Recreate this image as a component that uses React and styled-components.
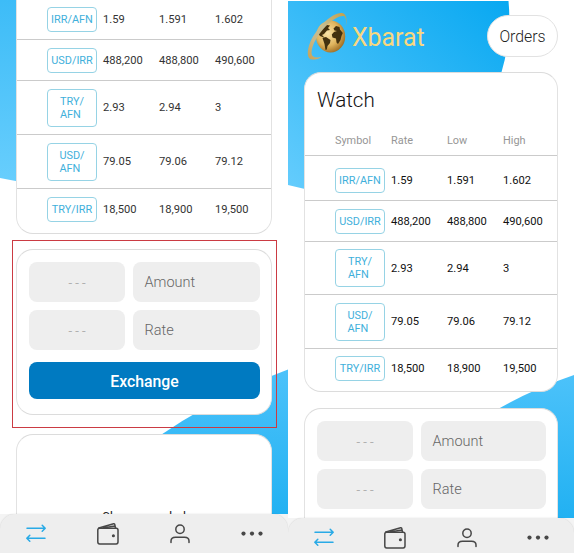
import React from "react";
import styled, { createGlobalStyle } from "styled-components";

const Global = createGlobalStyle`
  * { box-sizing: border-box; }
  body { margin: 0; background: #fff; font-family: Roboto, "Liberation Sans", sans-serif; }
`;

const Page = styled.div`
  display: grid;
  grid-template-columns: 288px 286px;
  width: 574px;
  height: 553px;
  overflow: hidden;
`;

const Screen = styled.section`
  position: relative;
  isolation: isolate;
  display: flex;
  flex-direction: column;
  height: 553px;
  overflow: hidden;
  background: #fff;
`;

const Backdrop = styled.svg`
  position: absolute;
  inset: 0;
  z-index: -1;
`;

const Content = styled.div`
  flex: 1;
  min-height: 0;
  padding: 0 16px;
  overflow: hidden;
  display: flex;
  flex-direction: column;
`;

const Header = styled.header`
  flex: none;
  height: 72px;
  padding: 15px 0 15px 2px;
  display: flex;
  align-items: flex-start;
`;

const Brand = styled.h1`
  margin: 7px 0 0 4px;
  flex: 1;
  font-size: 24.9px;
  line-height: 32px;
  font-weight: 400;
  color: #f8d77f;
`;

const Logo = styled.svg`
  flex: none;
  margin-top: -4px;
`;

const Orders = styled.button`
  width: 71px;
  height: 42px;
  border: 1px solid #e2e2e2;
  border-radius: 21px;
  background: #fff;
  padding: 2px 0 0;
  font: 300 15.8px/38px Roboto, sans-serif;
  color: #222;
`;

const Card = styled.div`
  flex: none;
  height: ${(p) => p.$h}px;
  margin-bottom: ${(p) => p.$gap ?? 16}px;
  border: 1px solid #dcdcdc;
  border-left-color: #e2e2e2;
  border-right-color: #e2e2e2;
  border-radius: ${(p) => (p.$continued ? "0 0 17px 17px" : "17px")};
  border-top-width: ${(p) => (p.$continued ? 0 : 1)}px;
  background: #fff;
`;

const Title = styled.h2`
  margin: 0;
  height: 53px;
  padding: 13px 0 0 12px;
  font-size: 20.6px;
  line-height: 28px;
  font-weight: 300;
  color: #111;
`;

const Row = styled.div`
  display: grid;
  grid-template-columns: 56px 56px 56px 1fr;
  align-items: center;
  height: ${(p) => p.$h}px;
  padding: ${(p) => p.$pad || 0}px 0 0 30px;
  border-bottom: 1px solid #cbcbcb;
  font-size: 11.15px;
  color: ${(p) => (p.$soft ? "#333" : "#111")};
  &:last-child { border-bottom: 0; padding: 0 0 3px 30px; }
`;

const HeadRow = styled(Row)`
  color: #969696;
  font-size: 10.9px;
`;

const Chip = styled.span`
  width: 50px;
  height: ${(p) => (p.$tall ? 38 : 25)}px;
  display: flex;
  align-items: center;
  justify-content: center;
  border: 1px solid #96d3e5;
  border-radius: 4px;
  color: #3fb0db;
  font-size: 10.9px;
  line-height: 13px;
  white-space: pre;
`;

const Form = styled.div`
  display: grid;
  grid-template-columns: 96px 1fr;
  gap: 8px;
  padding: 12px 11px 0 12px;
  grid-auto-rows: 40px;
`;

const Picker = styled.div`
  display: flex;
  align-items: center;
  justify-content: center;
  border-radius: 8px;
  background: #eee;
  color: #b0b0b0;
  font-size: 13px;
`;

const Field = styled.div`
  display: flex;
  align-items: center;
  padding: 1px 0 0 11.5px;
  border-radius: 8px;
  background: #eee;
  color: #666;
  font-size: 14.5px;
  font-weight: 300;
`;

const Exchange = styled.button`
  grid-column: 1 / -1;
  height: 37px;
  margin-top: 4px;
  border: 0;
  border-radius: 8px;
  background: #007ac1;
  color: #fff;
  padding: 2px 0 0;
  font: 500 15.8px Roboto, sans-serif;
`;

const Hint = styled.p`
  margin: 0;
  padding-top: 74px;
  text-align: center;
  font-size: 12.2px;
  line-height: 16px;
  color: #222;
`;

const NavShelf = styled.div`
  flex: none;
  background: #f4f4f4;
`;

const Nav = styled.nav`
  height: ${(p) => p.$h}px;
  display: grid;
  grid-template-columns: repeat(4, 1fr);
  justify-items: center;
  padding-top: 7px;
  border-radius: 15px 15px 0 0;
  background: #eee;
  box-shadow: 0 0 1.5px rgba(0, 0, 0, 0.16);
`;

const NavIcon = styled.svg`
  width: 26px;
  height: 26px;
  fill: none;
  stroke: ${(p) => (p.$active ? "#29aae6" : "#474747")};
  stroke-width: 1.5;
  stroke-linecap: round;
  stroke-linejoin: round;
`;

const Highlight = styled.div`
  position: absolute;
  left: 12px;
  top: 240px;
  width: 265px;
  height: 188px;
  border: 1px solid #cb3b43;
`;

function Globe() {
  return (
    <Logo width="42" height="50" viewBox="0 0 42 50">
      <defs>
        <radialGradient id="gold" cx=".4" cy=".4" r=".65">
          <stop offset="0" stopColor="#f9e3a8" />
          <stop offset=".6" stopColor="#dfb45d" />
          <stop offset="1" stopColor="#9d6b21" />
        </radialGradient>
        <linearGradient id="ring" x1="0" y1="1" x2="1" y2="0">
          <stop offset="0" stopColor="#c9a254" />
          <stop offset=".3" stopColor="#c9b888" />
          <stop offset=".55" stopColor="#c5bd92" />
          <stop offset="1" stopColor="#c79f45" />
        </linearGradient>
      </defs>
      <ellipse cx="24.6" cy="25.4" rx="14.6" ry="16" fill="url(#gold)" />
      <path d="M12 22L15 16L21 14L24 14.5L22 17L24 19L21 19.5L18 23L16 24L19 27L14 25Z" fill="#43310f" />
      <path d="M16.500 27L20 26L24.5 29L24 32L21.5 35L20.8 38.5L19.5 39L18.5 33Z" fill="#43310f" />
      <path d="M27.5 17.5L30 15L33.5 16L34 18.5L36.8 22L35.5 25L34.5 29L32 33L30.5 31.5L30 27.5L26.5 26.5L25.8 23.5L28 21L31 20L28.5 19.5Z" fill="#43310f" />
      <path d="M39.8 16C41.5 7 40 2.2 35.5 2C26 1.500 10.500 17 4.300 31C0.500 40.500 1 48 6 48.500C9 48.800 12.5 48 15.500 46C9.500 47 5.500 46.500 5.500 41.500C6 33 12 23 21 14C29 6.500 35.500 3.800 38.300 5.300C40.300 6.500 40.300 10.500 39.800 16Z" fill="url(#ring)" />
    </Logo>
  );
}

const QUOTES = [
  ["IRR/AFN", "1.59", "1.591", "1.602"],
  ["USD/IRR", "488,200", "488,800", "490,600"],
  ["TRY/\nAFN", "2.93", "2.94", "3"],
  ["USD/\nAFN", "79.05", "79.06", "79.12"],
  ["TRY/IRR", "18,500", "18,900", "19,500"],
];

function Quotes({ heights, firstPad, soft }) {
  return QUOTES.map(([symbol, ...values], i) => (
    <Row key={symbol} $h={heights[i]} $pad={i === 0 ? firstPad : 0} $soft={soft}>
      <Chip $tall={symbol.includes("\n")}>{symbol}</Chip>
      {values.map((v) => <span key={v}>{v}</span>)}
    </Row>
  ));
}

function Trade({ height, gap, action }) {
  return (
    <Card $h={height} $gap={gap}>
      <Form>
        <Picker>- - -</Picker><Field>Amount</Field>
        <Picker>- - -</Picker><Field>Rate</Field>
        {action && <Exchange>{action}</Exchange>}
      </Form>
    </Card>
  );
}

function BottomNav({ height }) {
  return (
    <NavShelf>
      <Nav $h={height}>
        <NavIcon $active viewBox="0 0 26 26">
          <path d="M4 7.3H22M19.2 4.3L22.2 7.3L19.2 10.3M22 17.3H4M6.8 14.3L3.8 17.3L6.8 20.3" />
        </NavIcon>
        <NavIcon viewBox="0 0 26 26">
          <rect x="2.8" y="7.3" width="20.2" height="15.6" rx="1.8" />
          <path d="M3.8 7L18.6 2.8Q19.6 2.6 19.8 3.6L20.5 7M8.5 7L19.6 5" />
          <circle cx="18.4" cy="14.8" r=".8" fill="#474747" />
        </NavIcon>
        <NavIcon viewBox="0 0 26 26">
          <circle cx="13" cy="8.2" r="4.2" />
          <path d="M4 21.5V20C4 17.5 6 16.2 8.5 16.2H17.5C20 16.2 22 17.5 22 20V21.5" />
        </NavIcon>
        <NavIcon viewBox="0 0 26 26">
          <g fill="#474747" stroke="none">
            <circle cx="4.5" cy="12.6" r="2.1" /><circle cx="13" cy="12.6" r="2.1" /><circle cx="21.5" cy="12.6" r="2.1" />
          </g>
        </NavIcon>
      </Nav>
    </NavShelf>
  );
}

export default function App() {
  return (
    <>
      <Global />
      <Page>
        <Screen>
          <Backdrop width="288" height="553">
            <defs>
              <linearGradient id="sky" x1="0" y1="1" x2="1" y2="0">
                <stop offset="0" stopColor="#66cdfd" /><stop offset="1" stopColor="#08a8f1" />
              </linearGradient>
              <linearGradient id="skyLow" x1="0" y1="0" x2="0" y2="1">
                <stop offset="0" stopColor="#3dbcf7" /><stop offset="1" stopColor="#68cefd" />
              </linearGradient>
              <linearGradient id="sea" x1="0" y1="0" x2="0" y2="1">
                <stop offset="0" stopColor="#4cc2fa" /><stop offset="1" stopColor="#17adf0" />
              </linearGradient>
            </defs>
            <path d="M0 0H200V140Q100 200 0 178Z" fill="url(#skyLow)" />
            <path d="M288 369.5Q218 396 160 435.5L150 553H288Z" fill="url(#sea)" />
          </Backdrop>
          <Content>
            <Card $h={234} $gap={15} $continued>
              <Quotes heights={[40, 41, 54, 54, 44]} soft />
            </Card>
            <Trade height={166} gap={19} action="Exchange" />
            <Card $h={120}><Hint>Choose symbol</Hint></Card>
          </Content>
          <BottomNav height={39} />
          <Highlight />
        </Screen>
        <Screen>
          <Backdrop width="286" height="553">
            <path d="M0 1H220.5Q224 38 213 74Q170 230 0 185Z" fill="url(#sky)" />
            <path d="M286 375Q245 389 210 409L200 553H286Z" fill="url(#sea)" />
          </Backdrop>
          <Content>
            <Header>
              <Globe />
              <Brand>Xbarat</Brand>
              <Orders>Orders</Orders>
            </Header>
            <Card $h={320}>
              <Title>Watch</Title>
              <HeadRow $h={30}>
                <span>Symbol</span><span>Rate</span><span>Low</span><span>High</span>
              </HeadRow>
              <Quotes heights={[45, 41, 53, 54, 42]} firstPad={5} />
            </Card>
            <Trade height={165} />
          </Content>
          <BottomNav height={35} />
        </Screen>
      </Page>
    </>
  );
}
